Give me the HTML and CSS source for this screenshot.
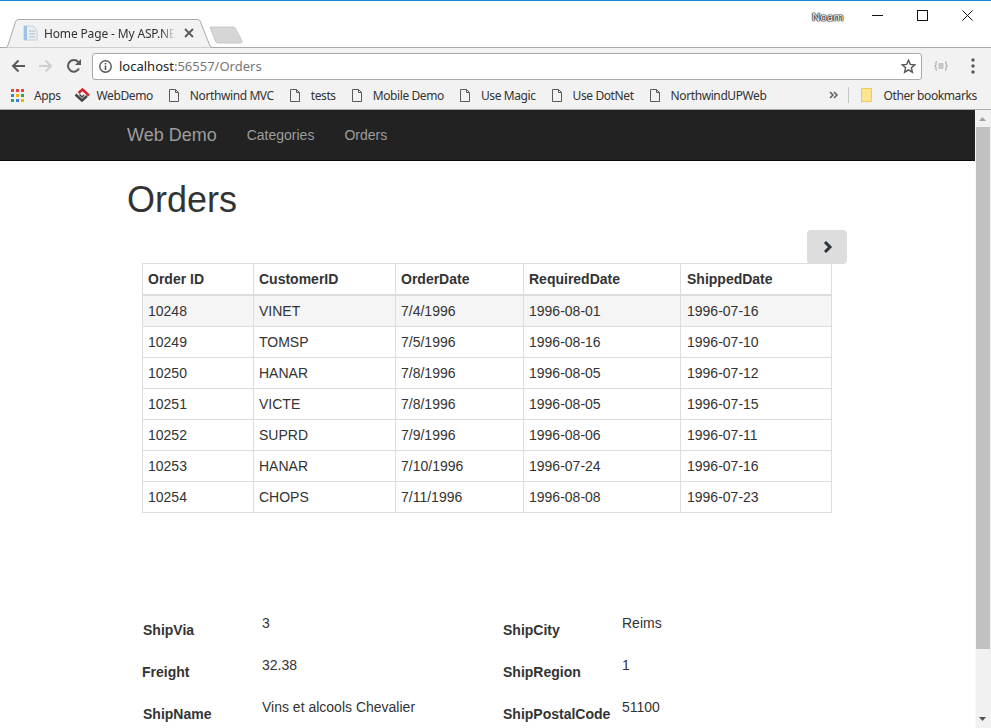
FILE: index.html
```html
<!DOCTYPE html>
<html lang="en">
<head>
  <meta charset="UTF-8">
  <meta name="viewport" content="width=device-width, initial-scale=1.0">
  <title>Orders</title>
  <link rel="stylesheet" href="styles.css">
</head>
<body>
  <div class="titlebar">
    <div class="tab">
      <svg class="tab-shape" width="208" height="29" viewBox="0 0 208 29">
        <path d="M0 28.500 C1 28.500 1.500 27.500 2 26 L9.500 3 C10.200 1.200 11 .5 13 .5 L191 .5 C193 .5 193.800 1.200 194.500 3 L203.500 26 C204 27.500 205 28.500 208 28.500" fill="#f2f2f2" stroke="#a9a9a9"/>
      </svg>
      <svg class="tab-icon" width="16" height="16" viewBox="0 0 16 16">
        <path d="M1 1h9l4 4v10H1z" fill="#e9eff5" stroke="#c3d0dc"/>
        <path d="M1 1h3v14H1z" fill="#9cc3e6"/>
        <path d="M6 6h6M6 9h6M6 12h6" stroke="#b0bac4"/>
      </svg>
      <span class="tab-title">Home Page - My ASP.NE</span>
      <svg class="tab-close" width="10" height="10" viewBox="0 0 10 10">
        <path d="M1 1l8 8M9 1l-8 8" stroke="#5a5a5a" stroke-width="1.800"/>
      </svg>
    </div>
    <svg class="new-tab" width="35" height="18" viewBox="0 0 35 18">
      <path d="M1 1h23c1 0 2 .5 2.500 1.500L33 15c.5 1-.2 2-1.500 2H9c-1 0-2-.5-2.500-1.500z" fill="#d6d6d6" stroke="#c9c9c9"/>
    </svg>
    <span class="user-name">Noam</span>
    <div class="win-controls">
      <svg width="11" height="11" viewBox="0 0 11 11"><path d="M0 5.500h11" stroke="#111"/></svg>
      <svg width="11" height="11" viewBox="0 0 11 11"><rect x=".5" y=".5" width="10" height="10" fill="none" stroke="#111"/></svg>
      <svg width="11" height="11" viewBox="0 0 11 11"><path d="M.5 .5l10 10M10.500 .5l-10 10" stroke="#111"/></svg>
    </div>
  </div>

  <div class="toolbar">
    <svg class="nav-icon" width="14" height="14" viewBox="0 0 14 14"><path d="M14 7H2M7.500 1.500L2 7l5.500 5.500" fill="none" stroke="#5a5a5a" stroke-width="2"/></svg>
    <svg class="nav-icon" width="14" height="14" viewBox="0 0 14 14"><path d="M0 7h12M6.500 1.500L12 7l-5.500 5.500" fill="none" stroke="#cfcfcf" stroke-width="2"/></svg>
    <svg class="nav-icon" width="14" height="14" viewBox="0 0 14 14"><path d="M12 9.500A5.800 5.800 0 1 1 11.200 3" fill="none" stroke="#5a5a5a" stroke-width="2"/><path d="M14 0v6H8z" fill="#5a5a5a"/></svg>
    <div class="omnibox">
      <svg width="13" height="13" viewBox="0 0 13 13"><circle cx="6.500" cy="6.500" r="5.700" fill="none" stroke="#555" stroke-width="1.400"/><path d="M6.500 5.500v4.500M6.500 3v1.500" stroke="#555" stroke-width="1.600"/></svg>
      <span class="url"><span class="url-host">localhost</span>:56557/Orders</span>
      <svg class="star" width="15" height="15" viewBox="0 0 15 15"><path d="M7.500 1.300l1.800 4.100 4.500.4-3.400 3 1 4.400-3.900-2.300-3.900 2.300 1-4.400-3.400-3 4.500-.4z" fill="none" stroke="#555" stroke-width="1.400"/></svg>
    </div>
    <svg class="ext-icon" width="14" height="10" viewBox="0 0 14 10"><path d="M3 .5C1.500 .5 2 2 2 3.500S.5 5 .5 5 2 5 2 6.500 1.500 9.500 3 9.500M11 .5c1.500 0 1 1.500 1 3S13.500 5 13.500 5 12 5 12 6.500s.5 3-1 3" fill="none" stroke="#9a9a9a"/><path d="M4.500 3h5M4.500 5h5M4.500 7h5" stroke="#9a9a9a"/></svg>
    <svg class="menu-icon" width="4" height="16" viewBox="0 0 4 16"><circle cx="2" cy="2" r="1.700" fill="#5a5a5a"/><circle cx="2" cy="8" r="1.700" fill="#5a5a5a"/><circle cx="2" cy="14" r="1.700" fill="#5a5a5a"/></svg>
  </div>

  <div class="bookmarks">
    <div class="bm bm-apps">
      <svg width="13" height="13" viewBox="0 0 13 13">
        <path d="M0 0h3v3H0z" fill="#e8453c"/><path d="M5 0h3v3H5z" fill="#e8453c"/><path d="M10 0h3v3h-3z" fill="#e8453c"/>
        <path d="M0 5h3v3H0z" fill="#3f7ee8"/><path d="M5 5h3v3H5z" fill="#f4b400"/><path d="M10 5h3v3h-3z" fill="#2fa84f"/>
        <path d="M0 10h3v3H0z" fill="#2fa84f"/><path d="M5 10h3v3H5z" fill="#3f7ee8"/><path d="M10 10h3v3h-3z" fill="#f4b400"/>
      </svg>
      Apps
    </div>
    <div class="bm bm-web">
      <svg width="16" height="14" viewBox="0 0 16 14">
        <path d="M1.500 6.500L8 12.500l5-4.500" fill="none" stroke="#444" stroke-width="2.500"/>
        <path d="M5.500 6.500L8 9l2-2" fill="none" stroke="#444" stroke-width="1.500"/>
        <path d="M4.500 5L8.500 1.500 15 7.500" fill="none" stroke="#d8232a" stroke-width="2.500"/>
      </svg>
      WebDemo
    </div>
    <div class="bm"><svg class="file" width="10" height="13" viewBox="0 0 10 13"><path d="M.5 .5h6l3 3v9h-9zM6.500 .5v3h3" fill="none" stroke="#5a5a5a"/></svg>Northwind MVC</div>
    <div class="bm"><svg class="file" width="10" height="13" viewBox="0 0 10 13"><path d="M.5 .5h6l3 3v9h-9zM6.500 .5v3h3" fill="none" stroke="#5a5a5a"/></svg>tests</div>
    <div class="bm"><svg class="file" width="10" height="13" viewBox="0 0 10 13"><path d="M.5 .5h6l3 3v9h-9zM6.500 .5v3h3" fill="none" stroke="#5a5a5a"/></svg>Mobile Demo</div>
    <div class="bm"><svg class="file" width="10" height="13" viewBox="0 0 10 13"><path d="M.5 .5h6l3 3v9h-9zM6.500 .5v3h3" fill="none" stroke="#5a5a5a"/></svg>Use Magic</div>
    <div class="bm"><svg class="file" width="10" height="13" viewBox="0 0 10 13"><path d="M.5 .5h6l3 3v9h-9zM6.500 .5v3h3" fill="none" stroke="#5a5a5a"/></svg>Use DotNet</div>
    <div class="bm"><svg class="file" width="10" height="13" viewBox="0 0 10 13"><path d="M.5 .5h6l3 3v9h-9zM6.500 .5v3h3" fill="none" stroke="#5a5a5a"/></svg>NorthwindUPWeb</div>
    <svg class="bm-more" width="9" height="8" viewBox="0 0 9 8"><path d="M1 1l3 3-3 3M5 1l3 3-3 3" fill="none" stroke="#5a5a5a" stroke-width="1.500"/></svg>
    <span class="bm-sep"></span>
    <div class="bm bm-other">
      <svg width="12" height="14" viewBox="0 0 12 14"><path d="M.5 .5h10v13H.5z" fill="#fde58f" stroke="#f0c95a"/></svg>
      Other bookmarks
    </div>
  </div>

  <div class="viewport">
    <div class="page">
      <nav class="navbar">
        <a class="brand">Web Demo</a>
        <a class="nav-link">Categories</a>
        <a class="nav-link">Orders</a>
      </nav>
      <div class="container">
        <h1>Orders</h1>
        <div class="pager">
          <button class="next-btn" type="button">
            <svg width="10" height="12" viewBox="0 0 10 12"><path d="M2 1l5 5-5 5" fill="none" stroke="#2f3640" stroke-width="3"/></svg>
          </button>
        </div>
        <table class="orders">
          <thead>
            <tr><th class="c1">Order ID</th><th class="c2">CustomerID</th><th class="c3">OrderDate</th><th class="c4">RequiredDate</th><th>ShippedDate</th></tr>
          </thead>
          <tbody>
            <tr class="selected"><td>10248</td><td>VINET</td><td>7/4/1996</td><td>1996-08-01</td><td>1996-07-16</td></tr>
            <tr><td>10249</td><td>TOMSP</td><td>7/5/1996</td><td>1996-08-16</td><td>1996-07-10</td></tr>
            <tr><td>10250</td><td>HANAR</td><td>7/8/1996</td><td>1996-08-05</td><td>1996-07-12</td></tr>
            <tr><td>10251</td><td>VICTE</td><td>7/8/1996</td><td>1996-08-05</td><td>1996-07-15</td></tr>
            <tr><td>10252</td><td>SUPRD</td><td>7/9/1996</td><td>1996-08-06</td><td>1996-07-11</td></tr>
            <tr><td>10253</td><td>HANAR</td><td>7/10/1996</td><td>1996-07-24</td><td>1996-07-16</td></tr>
            <tr><td>10254</td><td>CHOPS</td><td>7/11/1996</td><td>1996-08-08</td><td>1996-07-23</td></tr>
          </tbody>
        </table>
        <div class="details">
          <label>ShipVia</label><div>3</div>
          <label>ShipCity</label><div>Reims</div>
          <label class="label-freight">Freight</label><div>32.38</div>
          <label>ShipRegion</label><div>1</div>
          <label>ShipName</label><div>Vins et alcools Chevalier</div>
          <label>ShipPostalCode</label><div>51100</div>
        </div>
      </div>
    </div>
    <div class="scrollbar">
      <svg width="7" height="4" viewBox="0 0 7 4"><path d="M3.500 0L7 4H0z" fill="#a3a3a3"/></svg>
      <div class="thumb"></div>
      <svg width="7" height="4" viewBox="0 0 7 4"><path d="M0 0h7L3.500 4z" fill="#505050"/></svg>
    </div>
  </div>
</body>
</html>
```
FILE: styles.css
```css
html, body { margin: 0; height: 728px; overflow: hidden; }
body { font-family: "Liberation Sans", Arial, sans-serif; font-size: 14px; color: #333; background: #fff; display: flex; flex-direction: column; }

/* browser chrome */
.titlebar { border-top: 1px solid #1a86d8; border-bottom: 1px solid #a9a9a9; height: 46px; display: flex; align-items: flex-end; font-family: "Noto Sans", sans-serif; padding-left: 6px; }
.tab { width: 208px; height: 28px; position: relative; display: flex; align-items: center; margin-bottom: -1px; padding-bottom: 1px; }
.tab-shape { position: absolute; left: 0; top: 0; }
.tab-icon, .tab-title, .tab-close { position: relative; }
.tab-icon { margin-left: 17px; }
.tab-title { margin-left: 5px; width: 131px; overflow: hidden; white-space: nowrap; font-size: 12px; letter-spacing: -0.15px; color: #333; -webkit-mask-image: linear-gradient(to right, #000 90%, transparent); mask-image: linear-gradient(to right, #000 90%, transparent); }
.tab-close { margin-left: 9px; }
.new-tab { margin-left: -5px; margin-bottom: 3px; }
.user-name { margin-left: 568px; align-self: flex-start; margin-top: 8px; font-size: 11px; color: #fff; text-shadow: 0 0 1px #000, 0 0 1px #000, 0 0 1px #000, 0 0 2px #000; }
.win-controls { align-self: flex-start; margin-top: 9px; margin-left: 29px; display: flex; gap: 34px; }

.toolbar { height: 30px; padding: 3px 0 0 11px; background: #f2f2f2; display: flex; align-items: center; font-family: "Noto Sans", sans-serif; }
.toolbar .nav-icon { margin-right: 14px; }
.omnibox { width: 822px; height: 25px; margin-left: -3px; background: #fff; border: 1px solid #a9a9a9; border-radius: 3px; display: flex; align-items: center; padding-left: 6px; }
.url { margin-left: 7px; font-size: 13px; color: #777; }
.url-host { color: #222; }
.star { margin-left: auto; margin-right: 5px; }
.ext-icon { margin-left: 12px; }
.menu-icon { margin-left: 23px; }

.bookmarks { height: 28px; background: #f2f2f2; border-bottom: 1px solid #a9a9a9; display: flex; align-items: center; padding-left: 11px; font-family: "Noto Sans", sans-serif; font-size: 12px; letter-spacing: -0.4px; color: #333; }
.bm { display: flex; align-items: center; gap: 11px; margin-right: 16px; white-space: nowrap; }
.bm-apps { gap: 10px; margin-right: 13px; }
.bm-web { gap: 7px; }
.bm-more { margin-left: 47px; }
.bm-sep { width: 1px; height: 16px; background: #c4c4c4; margin: 0 12px 0 10px; }
.bm-other { gap: 10px; margin-right: 0; }

/* page */
.viewport { display: flex; flex: 1; min-height: 0; }
.page { flex: 1; min-width: 0; overflow: hidden; }
.navbar { height: 50px; background: #222; border-bottom: 1px solid #080808; display: flex; align-items: center; padding-left: 127px; color: #9d9d9d; }
.brand { font-size: 18px; margin-right: 30px; }
.nav-link { margin-right: 30px; }
.container { width: 720px; padding-left: 127px; }
h1 { font-size: 36px; font-weight: 500; line-height: 1.1; margin: 19px 0 10px; }
.pager { display: flex; justify-content: flex-end; margin-bottom: -1px; }
.next-btn { width: 40px; height: 34px; border: 0; border-radius: 4px; background: #ddd; display: flex; align-items: center; justify-content: center; padding: 0 0 0 2px; }

.orders { margin-left: 15px; width: 690px; border-collapse: collapse; table-layout: fixed; }
.orders th, .orders td { border: 1px solid #ddd; padding: 5px; line-height: 20px; text-align: left; }
.orders th { border-bottom-width: 2px; }
.orders .c1 { width: 100px; }
.orders .c2 { width: 131px; }
.orders .c3 { width: 117px; }
.orders .c4 { width: 146px; }
.orders th:last-child, .orders td:last-child { padding-left: 6px; }
.selected td { background: #f5f5f5; }

.details { margin: 100px 0 0 16px; display: grid; grid-template-columns: 119px 241px 119px 1fr; grid-auto-rows: 42px; line-height: 20px; }
.details label { font-weight: 700; padding-top: 7px; }
.details .label-freight { margin-left: -1px; }

.scrollbar { width: 16px; background: #f1f1f1; display: flex; flex-direction: column; align-items: flex-start; border-left: 1px solid #f8f8f8; box-sizing: border-box; }
.scrollbar svg { margin-left: 3px; }
.scrollbar svg:first-child { margin-top: 7px; }
.thumb { width: 14px; height: 522px; background: #c1c1c1; margin: 6px 0 auto; }
.scrollbar svg:last-child { margin-bottom: 7px; }
```
